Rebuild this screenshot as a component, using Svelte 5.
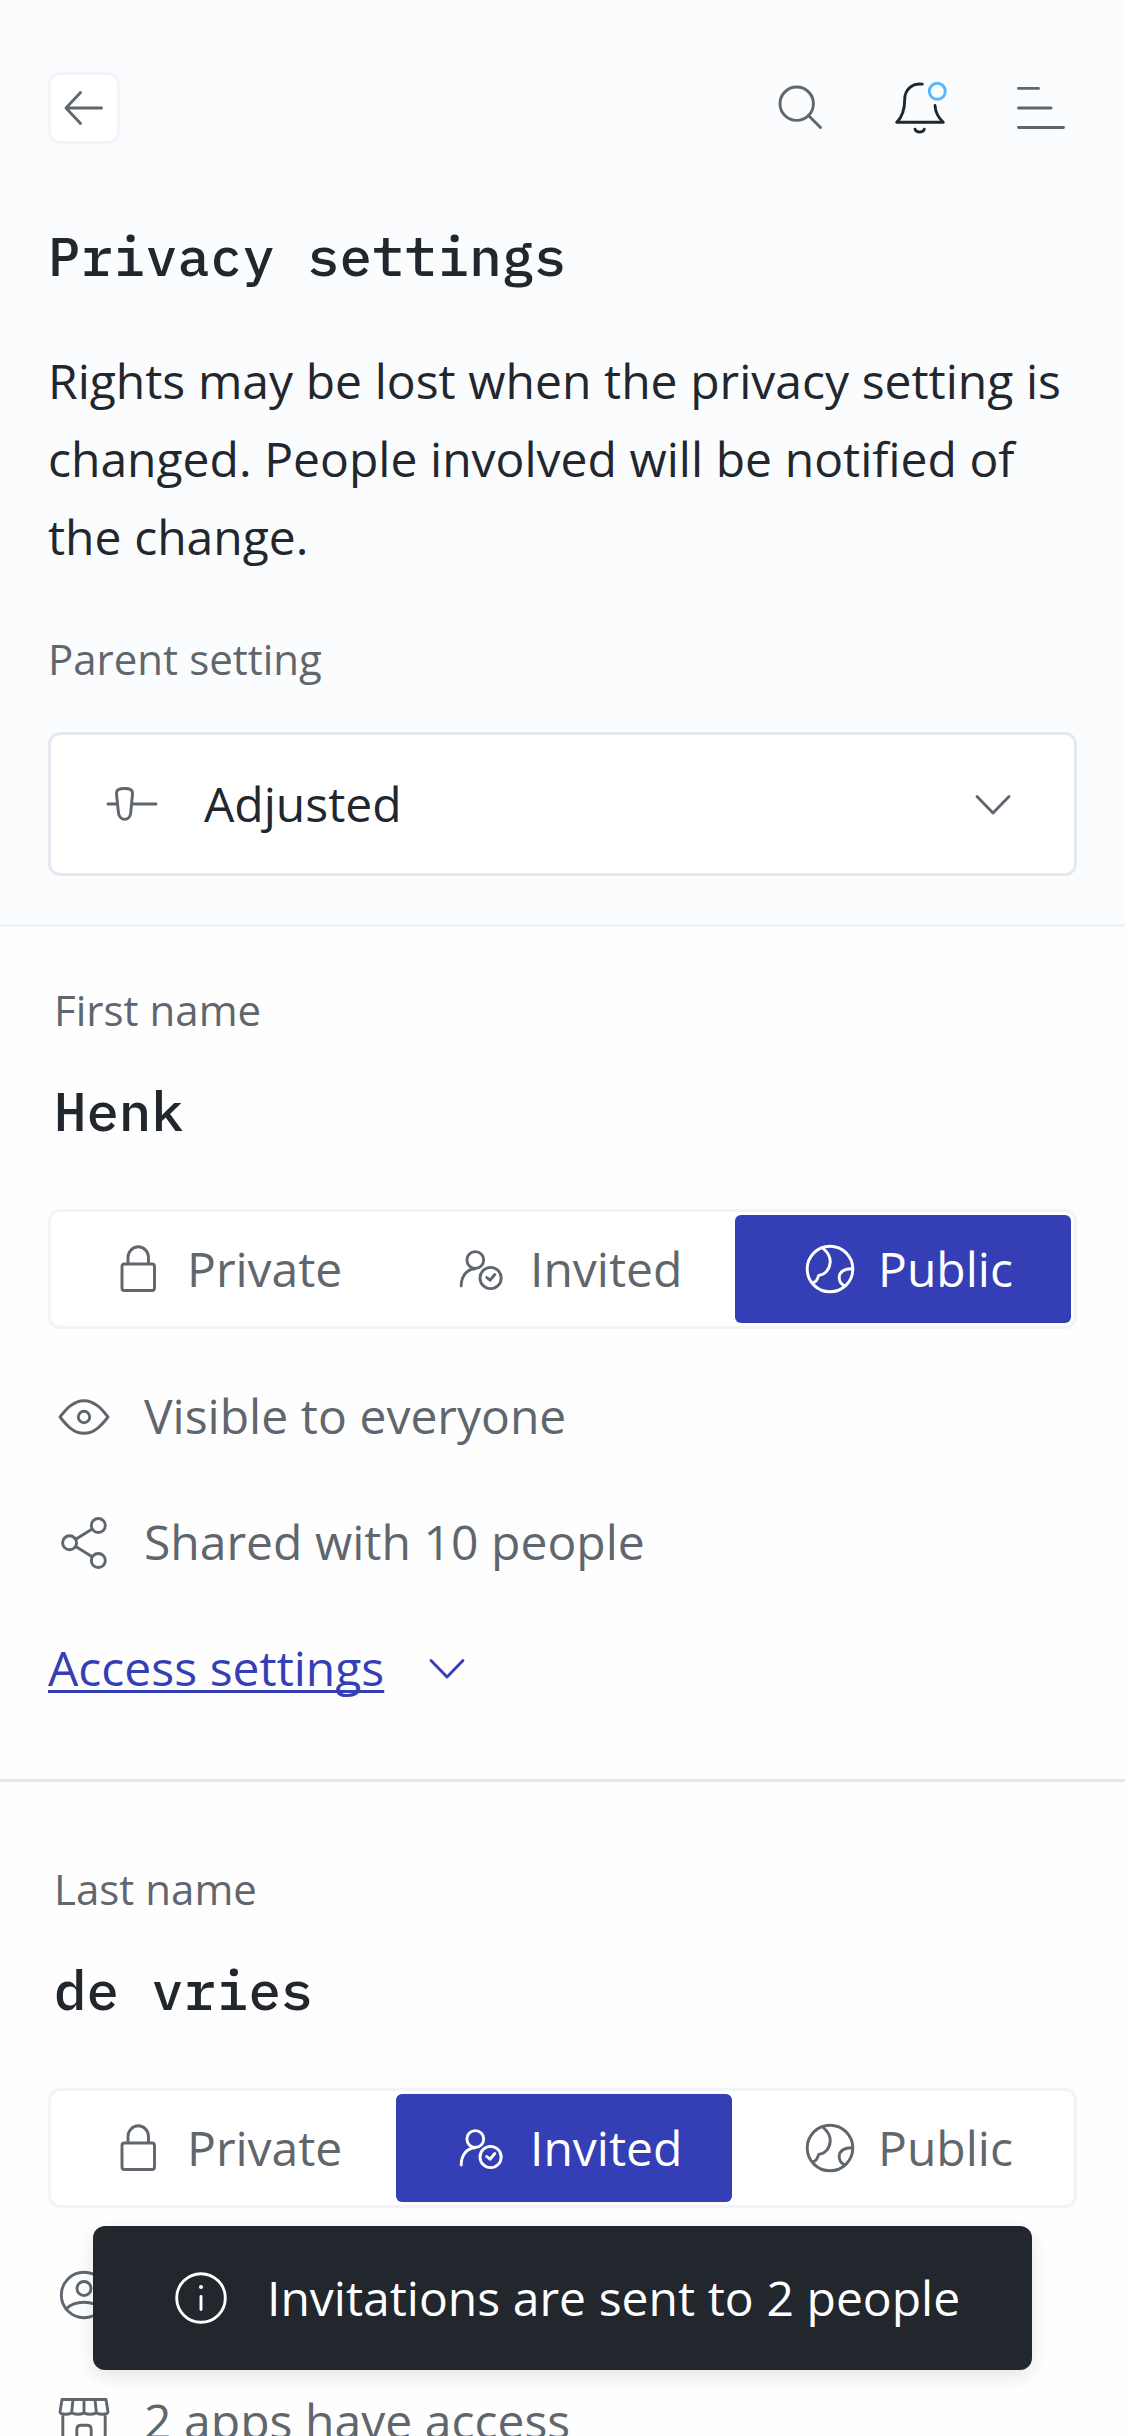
<script>
  const segments = [
    { id: 'private', label: 'Private', icon: 'lock' },
    { id: 'invited', label: 'Invited', icon: 'invited' },
    { id: 'public', label: 'Public', icon: 'globe' },
  ];

  const fields = [
    {
      label: 'First name',
      value: 'Henk',
      selected: 'public',
      facts: [
        { icon: 'eye', text: 'Visible to everyone' },
        { icon: 'share', text: 'Shared with 10 people' },
      ],
      link: 'Access settings',
    },
    {
      label: 'Last name',
      value: 'de vries',
      selected: 'invited',
      facts: [
        { icon: 'user', text: '' },
        { icon: 'store', text: '2 apps have access' },
      ],
      link: '',
    },
  ];
</script>

{#snippet icon(name)}
  <svg class="icon" viewBox="0 0 54 54" aria-hidden="true">
    {#if name === 'back'}
      <path d="M44.5 27H9M23.5 11.5 9 27l14.500 15.500" />
    {:else if name === 'search'}
      <circle cx="23.700" cy="22.700" r="16.700" />
      <path d="M35.500 34.500 47.500 46.500" />
    {:else if name === 'bell'}
      <path d="M29.300 3.100C18.500 2 11.700 9 11.700 18.500C11.700 29 8.800 36.500 3.700 41.300H50.300C45 36.500 42.400 31 42 24.500" />
      <path d="M22 48.200C23.500 52 29.800 52 31.300 48.200" />
      <circle class="dot" cx="44.300" cy="10.300" r="8" />
    {:else if name === 'menu'}
      <path d="M5.500 7.400H25.500M5.500 27H38M5.500 46.500H50.500" />
    {:else if name === 'slider'}
      <path d="M3 27H12.500M26.500 27H51M19.500 11.500C24.500 11.500 27.800 12.500 27.500 17L25.700 36C25 44.500 14.500 44.500 13.500 36L11.500 17C11.200 12.500 14.500 11.500 19.500 11.500Z" />
    {:else if name === 'chevron'}
      <path d="M11 19.500 27 36 43 19.500" />
    {:else if name === 'lock'}
      <path d="M17 21V15.500A10.200 10.700 0 0 1 37.500 15.500V21" />
      <rect x="11" y="22" width="32.500" height="26.500" rx="2.500" />
    {:else if name === 'invited'}
      <circle cx="20.300" cy="18" r="8.400" />
      <circle cx="35.600" cy="36" r="10.600" />
      <path d="M6.200 44C6.200 33.500 12.500 27 20 26.700M31.700 35.500 35 38.200 39.800 32.500" />
    {:else if name === 'globe'}
      <circle cx="27" cy="27" r="22.800" />
      <path d="M20.200 6.500C25 10.500 27.500 16 27.200 20.500C26.500 28 21.500 33 15.700 33.400C14.500 36.500 14 40.500 9.700 40.600M49.500 26.800C41 26.500 36.200 30 36.200 35.500C36.200 39 38 42 41 43.600" />
    {:else if name === 'eye'}
      <path d="M3 28C8.500 21 16 11.700 27 11.700S45.500 21 51 28C45.500 35 38 44.300 27 44.300S8.500 35 3 28Z" />
      <circle cx="27" cy="28" r="5.700" />
    {:else if name === 'share'}
      <circle cx="41.300" cy="10.500" r="7" />
      <circle cx="12.600" cy="27.800" r="7" />
      <circle cx="41.300" cy="45.500" r="7" />
      <path d="M18.700 24.200 35.200 14M18.700 31.500 35.200 41.800" />
    {:else if name === 'user'}
      <circle cx="27" cy="27" r="22.700" />
      <circle cx="27" cy="20.500" r="7" />
      <path d="M9 41C18 32 36 32 45 41" />
    {:else if name === 'store'}
      <path d="M5 5.500H49L51 18C51 21 39.300 21 39.300 18C39.300 21 27 21 27 18C27 21 14.700 21 14.700 18C14.700 21 3 21 3 18ZM16 5.500 14.700 18M27 5.500V18M38 5.500 39.300 18M5.800 20.500V50H48.200V20.500M19.800 50V35.500Q19.800 31.300 24 31.300H30Q34.200 31.300 34.200 35.500V50" />
    {:else if name === 'info'}
      <circle cx="27" cy="27" r="24.300" />
      <path d="M27 25.500V38.500" />
      <circle class="point" cx="27" cy="16" r="2" />
    {/if}
  </svg>
{/snippet}

<div class="screen">
  <header>
    <nav>
      <button class="back" aria-label="Back">{@render icon('back')}</button>
      <div class="actions">
        <button aria-label="Search">{@render icon('search')}</button>
        <button class="alerts" aria-label="Notifications">{@render icon('bell')}</button>
        <button aria-label="Menu">{@render icon('menu')}</button>
      </div>
    </nav>
    <h1>Privacy settings</h1>
    <p class="intro">Rights may be lost when the privacy setting is changed. People involved will be notified of the change.</p>
    <div class="label">Parent setting</div>
    <button class="select">
      {@render icon('slider')}
      <span class="choice">Adjusted</span>
      {@render icon('chevron')}
    </button>
  </header>

  {#each fields as field}
    <section>
      <div class="label">{field.label}</div>
      <h2>{field.value}</h2>
      <div class="segments">
        {#each segments as segment}
          <button class="segment {segment.id}" class:active={segment.id === field.selected}>
            {@render icon(segment.icon)}
            <span>{segment.label}</span>
          </button>
        {/each}
      </div>
      <div class="facts">
        {#each field.facts as fact}
          <div class="fact">{@render icon(fact.icon)}<span>{fact.text}</span></div>
        {/each}
        {#if field.link}
          <div class="link"><span>{field.link}</span>{@render icon('chevron')}</div>
        {/if}
      </div>
    </section>
  {/each}

  <div class="toast" role="status">
    {@render icon('info')}
    <span>Invitations are sent to 2 people</span>
  </div>
</div>

<style>
  :global(body) {
    margin: 0;
    overflow: hidden;
  }

  .screen {
    position: relative;
    box-sizing: border-box;
    width: 1125px;
    height: 2436px;
    overflow: hidden;
    background: #fefefe;
    color: #22272e;
    font: 400 48px/72px 'Open Sans', 'Noto Sans', sans-serif;
    word-spacing: 0.2px;
  }

  button {
    box-sizing: border-box;
    padding: 0;
    border: 0;
    background: none;
    color: inherit;
    font: inherit;
  }

  .icon {
    flex: none;
    display: block;
    width: 54px;
    height: 54px;
    overflow: visible;
    fill: none;
    stroke: currentColor;
    stroke-width: 2.9;
    stroke-linecap: round;
    stroke-linejoin: round;
  }

  .dot {
    stroke: #56b7ff;
  }

  .point {
    fill: currentColor;
    stroke: none;
  }

  header {
    box-sizing: border-box;
    height: 927px;
    padding: 72px 48px 0;
    border-bottom: 3px solid #f0f4f8;
    background: #fbfcfe;
  }

  nav,
  .actions {
    display: flex;
    align-items: center;
    justify-content: space-between;
    color: #5f666d;
  }

  .actions {
    gap: 66px;
    margin-right: 10px;
  }

  .back {
    display: flex;
    align-items: center;
    justify-content: center;
    width: 72px;
    height: 72px;
    border: 3px solid #f0f4f8;
    border-radius: 12px;
    background: #fff;
  }

  .alerts {
    color: #22272e;
  }

  h1,
  h2 {
    margin: 0;
    font: 500 54px/72px 'IBM Plex Mono', 'Liberation Mono', monospace;
    word-spacing: 0;
  }

  h1 {
    margin-top: 76px;
  }

  .intro {
    margin: 50px 0 0;
    line-height: 78px;
  }

  .label {
    color: #5f666d;
    font-size: 42px;
    line-height: 60px;
  }

  header .label {
    margin-top: 53px;
  }

  .select {
    display: flex;
    align-items: center;
    width: 100%;
    height: 144px;
    margin-top: 43px;
    padding: 0 54px;
    border: 3px solid #e4e9f0;
    border-radius: 12px;
    background: #fff;
    color: #5f666d;
  }

  .choice {
    flex: 1;
    margin-left: 45px;
    color: #22272e;
    text-align: left;
  }

  section {
    padding: 53px 48px 75px;
    border-bottom: 3px solid #e4e7eb;
  }

  section + section {
    padding-top: 77px;
  }

  section > .label,
  h2 {
    margin-left: 6px;
  }

  h2 {
    margin-top: 35px;
  }

  .segments {
    display: grid;
    grid-template-columns: repeat(3, 336px);
    gap: 3px;
    box-sizing: border-box;
    height: 120px;
    margin-top: 62px;
    padding: 3px 3px 3px 6px;
    border: 3px solid #f0f4f8;
    border-radius: 12px;
    background: #fff;
    color: #5f666d;
  }

  .segment {
    display: flex;
    align-items: center;
    gap: 21px;
    border-radius: 6px;
  }

  .private {
    gap: 22px;
    padding-left: 54px;
  }

  .invited {
    padding-left: 59px;
  }

  .public {
    padding-left: 68px;
  }

  .active {
    background: #343fb5;
    color: #fff;
  }

  .facts {
    display: flex;
    flex-direction: column;
    gap: 54px;
    margin-top: 51px;
    color: #5f666d;
  }

  .fact,
  .link {
    display: flex;
    align-items: center;
    height: 72px;
  }

  .fact {
    gap: 33px;
    padding-left: 9px;
    white-space: nowrap;
  }

  .link {
    gap: 36px;
    color: #343fb5;
  }

  .link span {
    text-decoration: underline;
    text-decoration-thickness: 3px;
    text-decoration-skip-ink: none;
    text-underline-offset: 4px;
  }

  .toast {
    position: absolute;
    top: 2226px;
    left: 93px;
    display: flex;
    align-items: center;
    gap: 39px;
    box-sizing: border-box;
    width: 939px;
    height: 144px;
    padding-left: 81px;
    border-radius: 12px;
    background: #22272e;
    box-shadow: 0 6px 18px rgba(0, 0, 0, 0.1);
    color: #fff;
    white-space: nowrap;
  }
</style>
